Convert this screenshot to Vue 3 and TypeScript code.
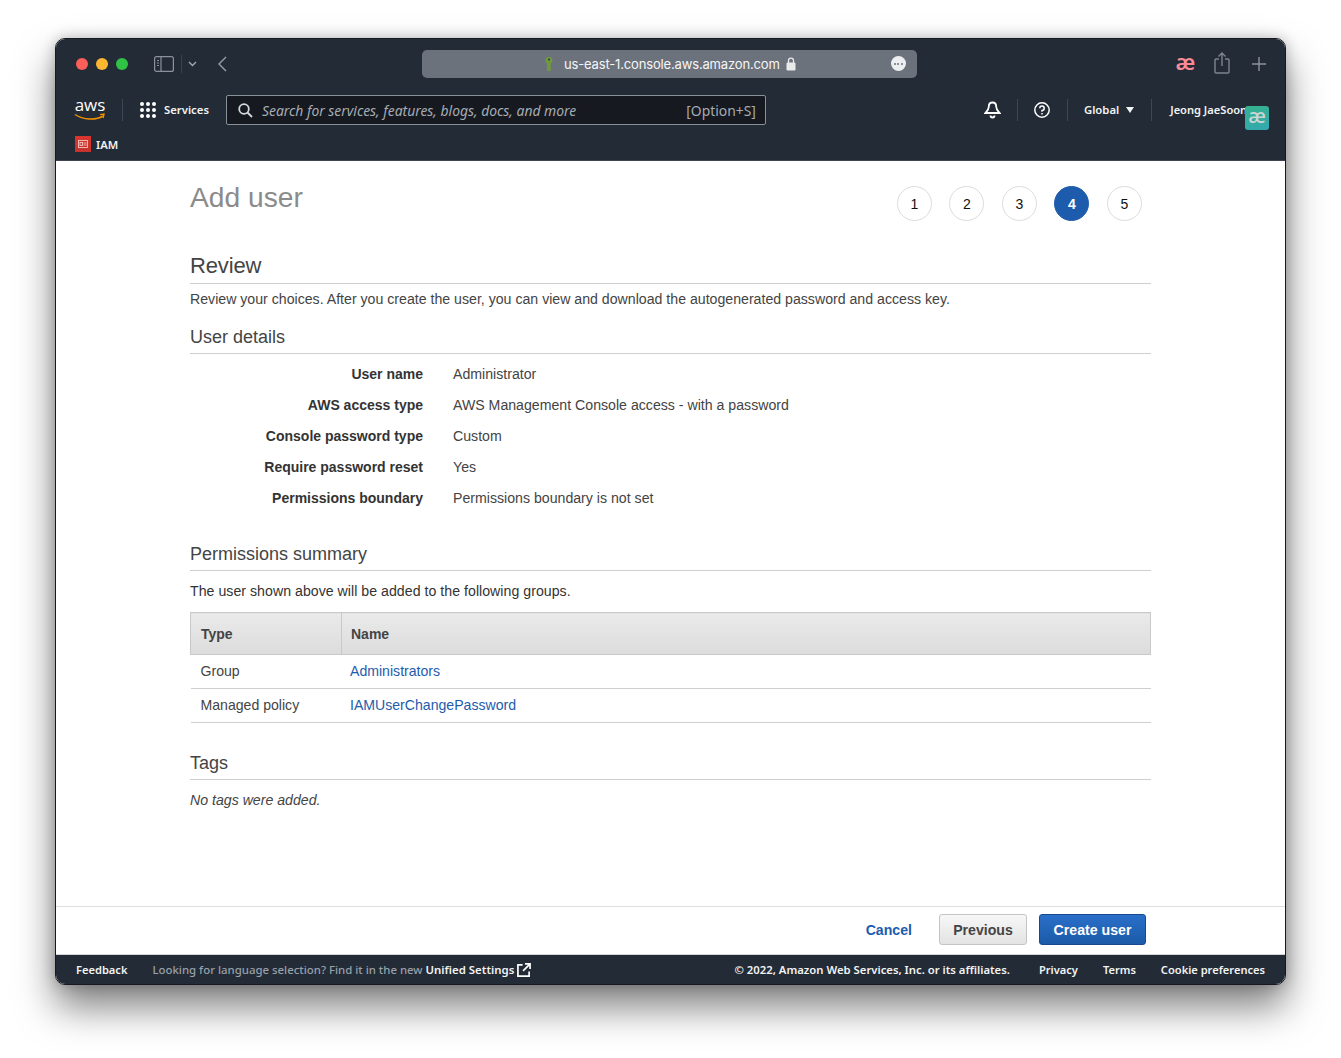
<script setup lang="ts">
const steps = [1, 2, 3, 4, 5]
const details = [
  ['User name', 'Administrator'],
  ['AWS access type', 'AWS Management Console access - with a password'],
  ['Console password type', 'Custom'],
  ['Require password reset', 'Yes'],
  ['Permissions boundary', 'Permissions boundary is not set'],
]
const rows = [
  ['Group', 'Administrators'],
  ['Managed policy', 'IAMUserChangePassword'],
]
</script>

<template>
  <div class="page">
    <div class="window">
      <header class="chrome">
        <div class="titlebar">
          <div class="lights"><i class="red"></i><i class="yellow"></i><i class="green"></i></div>
          <svg class="sidebar-ico" width="20" height="16" viewBox="0 0 20 16" fill="none" stroke="#8b929c" stroke-width="1.2">
            <rect x="0.6" y="0.6" width="18.8" height="14.8" rx="2" />
            <path d="M7 1v14M3 4.500h2M3 7h2M3 9.500h2" />
          </svg>
          <span class="sep"></span>
          <svg class="chev" width="9" height="6" viewBox="0 0 9 6" fill="none" stroke="#a4a9b1" stroke-width="1.4"><path d="M1 1l3.500 3.500L8 1" /></svg>
          <svg class="back" width="9" height="16" viewBox="0 0 9 16" fill="none" stroke="#9aa0a8" stroke-width="1.4"><path d="M8 1L1 8l7 7" /></svg>
          <div class="url">
            <svg class="key" width="10" height="16" viewBox="0 0 10 16"><path fill="#6f9a3c" d="M5 1a3.400 3.400 0 0 1 3.400 3.400c0 1.300-.7 2.300-1.700 2.900V15H3.500L3 13.500V7.300A3.400 3.400 0 0 1 5 1z" /><circle cx="5" cy="3.500" r="1" fill="#2a3540" /></svg>
            <span class="host">us-east-1.console.aws.amazon.com</span>
            <svg class="lock" width="10" height="14" viewBox="0 0 10 14"><path fill="none" stroke="#e8eaec" stroke-width="1.300" d="M2.500 6V3.600a2.500 2.500 0 0 1 5 0V6" /><rect x="0.500" y="5.500" width="9" height="8" rx="1.200" fill="#e8eaec" /></svg>
            <span class="more"><b></b><b></b><b></b></span>
          </div>
          <span class="ae-pink">æ</span>
          <svg class="share" width="16" height="22" viewBox="0 0 16 22" fill="none" stroke="#7e858f" stroke-width="1.400"><path d="M5 7H2a1 1 0 0 0-1 1v12a1 1 0 0 0 1 1h12a1 1 0 0 0 1-1V8a1 1 0 0 0-1-1h-3M8 14V1.500M4.500 4.500L8 1l3.500 3.500" /></svg>
          <svg class="plus" width="14" height="14" viewBox="0 0 14 14" stroke="#8d949d" stroke-width="1.400"><path d="M7 0v14M0 7h14" /></svg>
        </div>

        <div class="nav">
          <div class="aws">
            <span class="aws-word">aws</span>
            <svg width="32" height="8" viewBox="0 0 32 8" fill="none"><path d="M1 1.500C9 7 22 7.500 29 3" stroke="#f29100" stroke-width="1.500" /><path d="M26 1.600l4-.6-.8 4" stroke="#f29100" stroke-width="1.300" /></svg>
          </div>
          <span class="nav-sep first"></span>
          <div class="services">
            <span class="grid"><i v-for="n in 9" :key="n"></i></span>
            <span class="nav-label">Services</span>
          </div>
          <div class="search">
            <svg width="15" height="15" viewBox="0 0 15 15" fill="none" stroke="#d5d9dd" stroke-width="1.800"><circle cx="6" cy="6" r="4.800" /><path d="M9.500 9.500L14 14" /></svg>
            <span class="placeholder">Search for services, features, blogs, docs, and more</span>
            <span class="shortcut">[Option+S]</span>
          </div>
          <svg class="bell" width="17" height="18" viewBox="0 0 17 18" fill="none" stroke="#fff" stroke-width="1.800"><path d="M8.500 1.500c2.500 0 3.700 2 3.700 4.200 0 2.500 1.500 4.500 3.300 6.300H1.500c1.800-1.800 3.300-3.800 3.300-6.300 0-2.200 1.200-4.200 3.700-4.200z" /><path d="M6.500 14.500a2 2 0 0 0 4 0" /></svg>
          <span class="nav-sep"></span>
          <svg class="help" width="16" height="16" viewBox="0 0 16 16" fill="none" stroke="#fff" stroke-width="1.500"><circle cx="8" cy="8" r="7.200" /><path d="M5.800 6.200A2.200 2.200 0 1 1 8 8.500v1.200" /><path d="M8 11v1.500" /></svg>
          <span class="nav-sep"></span>
          <span class="nav-label global">Global</span>
          <span class="tri"></span>
          <span class="nav-sep"></span>
          <span class="nav-label user">Jeong JaeSoon</span>
          <span class="tri user-tri"></span>
          <span class="avatar">æ</span>
        </div>

        <div class="crumb">
          <span class="iam-ico">
            <svg width="10" height="8" viewBox="0 0 10 8" fill="none" stroke="#f4c6c0" stroke-width="0.900"><rect x="0.500" y="0.500" width="9" height="7" /><rect x="2" y="2.500" width="2.500" height="3" /><path d="M5.500 3h3M5.500 5h3" /></svg>
          </span>
          <span class="nav-label">IAM</span>
        </div>
      </header>

      <main class="main">
        <div class="content">
          <div class="top">
            <h1>Add user</h1>
            <div class="steps">
              <span v-for="s in steps" :key="s" class="step" :class="{ active: s === 4 }">{{ s }}</span>
            </div>
          </div>

          <h2 class="review">Review</h2>
          <p class="intro">Review your choices. After you create the user, you can view and download the autogenerated password and access key.</p>

          <h3 class="details-title">User details</h3>
          <dl class="details">
            <div v-for="d in details" :key="d[0]" class="detail">
              <dt>{{ d[0] }}</dt>
              <dd>{{ d[1] }}</dd>
            </div>
          </dl>

          <h3 class="perm-title">Permissions summary</h3>
          <p class="perm-text">The user shown above will be added to the following groups.</p>
          <table>
            <thead>
              <tr><th class="c1">Type</th><th>Name</th></tr>
            </thead>
            <tbody>
              <tr v-for="r in rows" :key="r[0]">
                <td>{{ r[0] }}</td>
                <td class="c2"><a>{{ r[1] }}</a></td>
              </tr>
            </tbody>
          </table>

          <h3 class="tags-title">Tags</h3>
          <p class="no-tags">No tags were added.</p>
        </div>

        <div class="actions">
          <a class="cancel">Cancel</a>
          <button class="btn prev">Previous</button>
          <button class="btn create">Create user</button>
        </div>
      </main>

      <footer class="footer">
        <span class="feedback">Feedback</span>
        <span class="lang">Looking for language selection? Find it in the new <b>Unified Settings</b></span>
        <svg class="ext" width="14" height="14" viewBox="0 0 15 15" fill="none" stroke="#fff" stroke-width="1.800"><path d="M6 2H1v12h12V9M8.500 1H14v5.500M14 1L6.500 8.500" /></svg>
        <span class="copy">© 2022, Amazon Web Services, Inc. or its affiliates.</span>
        <span class="flink privacy">Privacy</span>
        <span class="flink terms">Terms</span>
        <span class="flink cookie">Cookie preferences</span>
      </footer>
    </div>
  </div>
</template>

<style scoped>
.page {
  box-sizing: border-box;
  height: 1058px;
  padding: 38px 55px 0 55px;
  background: #fff;
  overflow: hidden;
}
.window {
  box-sizing: border-box;
  width: 1231px;
  height: 947px;
  display: flex;
  flex-direction: column;
  border-radius: 10px;
  overflow: hidden;
  background: #fff;
  border: 1px solid #16191f;
  box-shadow: 0 22px 38px rgba(0, 0, 0, 0.5), 0 0 14px rgba(0, 0, 0, 0.24);
  font-family: "Liberation Sans", Arial, sans-serif;
}
.chrome {
  background: #232b37;
  height: 122px;
  flex: none;
  border-bottom: 1px solid #3b444f;
  box-sizing: border-box;
  font-family: "Noto Sans", sans-serif;
  color: #fff;
}
.titlebar {
  height: 50px;
  display: flex;
  align-items: center;
}
.lights {
  display: flex;
  gap: 8px;
  margin-left: 20px;
}
.lights i {
  width: 12px;
  height: 12px;
  border-radius: 50%;
}
.red { background: #fb5f57; }
.yellow { background: #fcb62f; }
.green { background: #2fc244; }
.sidebar-ico { margin-left: 26px; }
.sep {
  width: 1px;
  height: 18px;
  background: #3a424d;
  margin-left: 7px;
}
.chev { margin-left: 6px; }
.back { margin-left: 21px; }
.url {
  width: 495px;
  height: 28px;
  margin-left: 194.500px;
  background: #6c727c;
  border-radius: 5px;
  display: flex;
  align-items: center;
  position: relative;
  color: #f5f6f7;
  font-size: 13px;
}
.key { margin-left: 122px; }
.host {
  margin-left: 10.500px;
  font-family: "Inter", "Noto Sans", sans-serif;
  font-size: 13px;
  letter-spacing: -0.16px;
  white-space: nowrap;
}
.lock { margin-left: 6px; }
.more {
  position: absolute;
  right: 11px;
  top: 6px;
  width: 15px;
  height: 15px;
  border-radius: 50%;
  background: #eceef0;
  display: flex;
  align-items: center;
  justify-content: center;
  gap: 1.500px;
}
.more b {
  width: 2px;
  height: 2px;
  border-radius: 50%;
  background: #6c727c;
}
.ae-pink {
  margin: -6px 0 0 259px;
  color: #fc8a96;
  font-family: "Noto Sans", sans-serif;
  font-size: 22px;
  font-weight: 600;
  line-height: 1;
}
.share { margin-left: 19px; margin-top: -3px; }
.plus { margin-left: 22px; }

.nav {
  box-sizing: border-box;
  height: 43px;
  padding-bottom: 2px;
  display: flex;
  align-items: center;
  position: relative;
}
.aws {
  margin-left: 18px;
  width: 32px;
  display: flex;
  flex-direction: column;
  align-items: center;
  margin-top: -1px;
}
.aws-word {
  font-size: 17px;
  line-height: 16px;
  color: #fff;
  font-family: "Open Sans", sans-serif;
}
.nav-sep {
  width: 1px;
  height: 22px;
  background: #3e4753;
}
.nav-sep.first { margin-left: 16px; }
.services {
  display: flex;
  align-items: center;
  margin-left: 17px;
  gap: 8px;
}
.grid {
  display: grid;
  grid-template-columns: repeat(3, 4px);
  gap: 2px;
}
.grid i {
  width: 4px;
  height: 4px;
  border-radius: 50%;
  background: #fff;
}
.nav-label {
  font-size: 11.300px;
  font-weight: 600;
  color: #f2f3f3;
  white-space: nowrap;
}
.search {
  box-sizing: border-box;
  width: 540px;
  height: 30px;
  margin-left: 17px;
  background: #16191f;
  border: 1px solid #879196;
  border-radius: 2px;
  display: flex;
  align-items: center;
  padding: 2px 9px 0 11px;
  font-size: 13.900px;
  color: #a5acb4;
}
.placeholder {
  margin-left: 9px;
  font-style: italic;
  flex: 1;
  white-space: nowrap;
}
.bell { margin-left: 218px; }
.bell + .nav-sep { margin-left: 16px; }
.help { margin-left: 16px; }
.help + .nav-sep { margin-left: 17px; }
.global { margin-left: 16px; }
.tri {
  width: 0;
  height: 0;
  border-left: 4px solid transparent;
  border-right: 4px solid transparent;
  border-top: 6px solid #f2f3f3;
  margin-left: 7px;
}
.global + .tri + .nav-sep { margin-left: 17px; }
.user { margin-left: 18px; font-size: 11.100px; }
.user-tri {
  position: absolute;
  right: 19px;
  top: 18px;
  border-top-color: #4ba58e;
}
.avatar {
  position: absolute;
  left: 1189px;
  top: 17px;
  width: 24px;
  height: 24px;
  border-radius: 3px;
  background: linear-gradient(160deg, #35b28c, #34a7b3);
  color: #c9d6d4;
  font-size: 20px;
  font-weight: 500;
  line-height: 20px;
  text-align: center;
}
.crumb {
  display: flex;
  align-items: center;
  margin: 4px 0 0 19px;
  gap: 5px;
}
.iam-ico {
  width: 16px;
  height: 16px;
  background: linear-gradient(180deg, #d9352d, #c5332c);
  display: flex;
  align-items: center;
  justify-content: center;
}

.main {
  flex: 1;
  min-height: 0;
  display: flex;
  flex-direction: column;
  color: #333;
}
.content {
  flex: 1;
  padding: 0 134px;
  font-size: 14.150px;
}
.top {
  display: flex;
  justify-content: space-between;
  height: 83px;
}
h1 {
  margin: 20px 0 0;
  font-size: 28.200px;
  line-height: 32px;
  font-weight: 400;
  color: #8b8b8b;
}
.steps {
  display: flex;
  gap: 17.500px;
  margin: 25px 9.200px 0 0;
}
.step {
  box-sizing: border-box;
  width: 35px;
  height: 35px;
  border: 1px solid #dcdcdc;
  border-radius: 50%;
  display: flex;
  align-items: center;
  justify-content: center;
  color: #111;
  font-size: 14px;
}
.step.active {
  background: #1d5cad;
  border-color: #1d5cad;
  color: #fff;
  font-weight: 700;
}
h2, h3 {
  margin: 0;
  font-weight: 400;
  border-bottom: 1px solid #cfcfcf;
  color: #444;
}
.review {
  font-size: 22px;
  line-height: 27px;
  padding-bottom: 4px;
  margin-top: 8px;
  letter-spacing: -0.15px;
}
.intro {
  margin: 7px 0 0;
  line-height: 16px;
  color: #444;
}
.details-title {
  font-size: 18px;
  line-height: 22px;
  padding-bottom: 5px;
  margin-top: 19px;
}
.details { margin: 5px 0 0; }
.detail {
  display: grid;
  grid-template-columns: 233px 1fr;
  column-gap: 30px;
  height: 31px;
  line-height: 31px;
}
dt {
  text-align: right;
  font-weight: 700;
  font-size: 14px;
  color: #333;
  white-space: nowrap;
}
dd {
  margin: 0;
  color: #444;
}
.perm-title {
  font-size: 18px;
  line-height: 22px;
  padding-bottom: 5px;
  margin-top: 29px;
}
.perm-text {
  margin: 12px 0 0;
  line-height: 16px;
  color: #333;
  letter-spacing: 0.03px;
}
table {
  width: 100%;
  margin-top: 13px;
  border-collapse: collapse;
  font-size: 14.100px;
}
th {
  height: 41px;
  padding: 0 9px;
  text-align: left;
  font-weight: 700;
  font-size: 14px;
  color: #444;
  background: linear-gradient(180deg, #eaeaea, #dcdcdc);
  border: 1px solid #c9c9c9;
}
th.c1 { width: 131px; padding-left: 10px; }
td {
  height: 34px;
  padding: 0 10px 2px;
  box-sizing: border-box;
  border-bottom: 1px solid #cfcfcf;
  color: #444;
}
td.c2 { padding-left: 8.500px; }
a { color: #1d5cad; }
.tags-title {
  font-size: 18px;
  line-height: 22px;
  padding-bottom: 5px;
  margin-top: 29px;
}
.no-tags {
  margin: 12px 0 0;
  line-height: 16px;
  font-style: italic;
  color: #444;
}
.actions {
  flex: none;
  box-sizing: border-box;
  height: 49px;
  border-top: 1px solid #dedede;
  border-bottom: 1px solid #d5d5d5;
  display: flex;
  align-items: center;
  justify-content: flex-end;
  padding: 0 139px 2px 0;
  font-size: 14.150px;
  font-weight: 700;
}
.cancel { margin-right: 27px; color: #1d5cad; }
.btn {
  font: inherit;
  height: 31px;
  border-radius: 3px;
  box-sizing: border-box;
}
.prev {
  width: 88px;
  color: #444;
  background: linear-gradient(180deg, #f7f7f7, #e3e3e3);
  border: 1px solid #c4c4c4;
  margin-right: 12px;
}
.create {
  width: 107px;
  color: #fff;
  background: linear-gradient(180deg, #2a6fc9, #1b5aa8);
  border: 1px solid #17498c;
}

.footer {
  flex: none;
  height: 29px;
  background: #232b37;
  color: #f2f3f3;
  display: flex;
  align-items: center;
  font-family: "Noto Sans", sans-serif;
  font-size: 11.300px;
  font-weight: 600;
  white-space: nowrap;
  padding: 0 20px;
}
.feedback, .flink { font-size: 11.100px; }
.lang {
  margin-left: 25px;
  font-size: 11.420px;
  color: #98a0a8;
  font-weight: 500;
}
.lang b { color: #f2f3f3; font-weight: 600; }
.ext { margin-left: 3px; }
.copy { margin-left: auto; }
.privacy { margin-left: 29px; }
.terms { margin-left: 25px; }
.cookie { margin-left: 25px; }
</style>
